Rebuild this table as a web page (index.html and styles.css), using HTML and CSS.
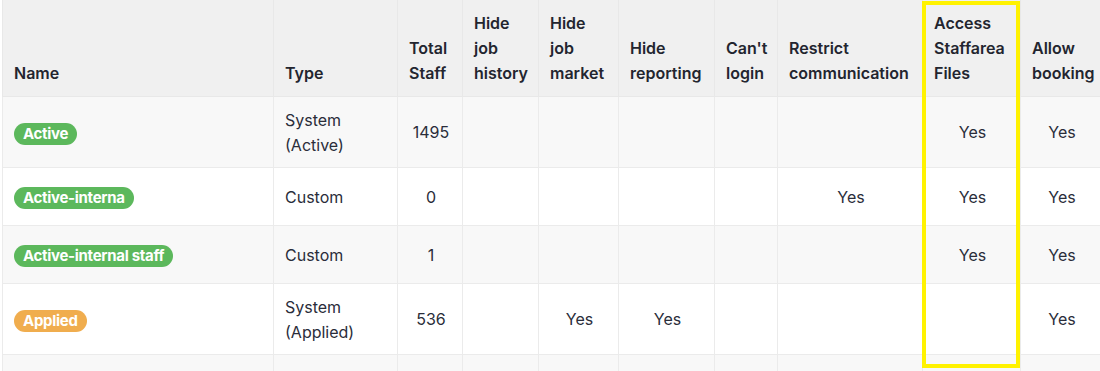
FILE: index.html
```html
<!DOCTYPE html>
<html>
<head>
<meta charset="utf-8">
<link rel="stylesheet" href="styles.css">
</head>
<body>
<div class="wrap">
  <table class="grid">
    <colgroup>
      <col class="c-name"><col class="c-type"><col class="c-total"><col class="c-hjh"><col class="c-hjm"><col class="c-hr"><col class="c-cl"><col class="c-rc"><col class="c-acc"><col class="c-ab">
    </colgroup>
    <thead>
      <tr>
        <th>Name</th>
        <th>Type</th>
        <th>Total<br>Staff</th>
        <th>Hide<br>job<br>history</th>
        <th>Hide<br>job<br>market</th>
        <th>Hide<br>reporting</th>
        <th>Can't<br>login</th>
        <th>Restrict<br>communication</th>
        <th>Access<br>Staffarea<br>Files</th>
        <th>Allow<br>booking</th>
      </tr>
    </thead>
    <tbody>
      <tr>
        <td><span class="badge green">Active</span></td>
        <td class="left">System<br>(Active)</td>
        <td>1495</td>
        <td></td><td></td><td></td><td></td><td></td>
        <td>Yes</td>
        <td>Yes</td>
      </tr>
      <tr>
        <td><span class="badge green">Active-interna</span></td>
        <td class="left">Custom</td>
        <td>0</td>
        <td></td><td></td><td></td><td></td>
        <td>Yes</td>
        <td>Yes</td>
        <td>Yes</td>
      </tr>
      <tr>
        <td><span class="badge green">Active-internal staff</span></td>
        <td class="left">Custom</td>
        <td>1</td>
        <td></td><td></td><td></td><td></td><td></td>
        <td>Yes</td>
        <td>Yes</td>
      </tr>
      <tr>
        <td><span class="badge orange">Applied</span></td>
        <td class="left">System<br>(Applied)</td>
        <td>536</td>
        <td></td>
        <td>Yes</td>
        <td>Yes</td>
        <td></td><td></td><td></td>
        <td>Yes</td>
      </tr>
      <tr>
        <td></td><td></td><td></td><td></td><td></td><td></td><td></td><td></td><td></td><td></td>
      </tr>
    </tbody>
  </table>
  <div class="highlight"></div>
</div>
</body>
</html>
```
FILE: styles.css
```css
html, body {
  margin: 0;
  padding: 0;
  overflow: hidden;
  background: #ffffff;
}
body {
  font-family: "Inter", "Liberation Sans", sans-serif;
  color: #2a2d3a;
}
.wrap {
  position: relative;
  padding-left: 2px;
}
.grid {
  border-collapse: collapse;
  table-layout: fixed;
  width: 1099px;
}
.c-name { width: 271px; }
.c-type { width: 124px; }
.c-total { width: 65px; }
.c-hjh { width: 76px; }
.c-hjm { width: 80px; }
.c-hr { width: 96px; }
.c-cl { width: 63px; }
.c-rc { width: 145px; }
.c-acc { width: 98px; }
.c-ab { width: 81px; }
.grid th {
  background: #f0f0f0;
  border: 1px solid #e8e8e8;
  border-top: none;
  text-align: left;
  vertical-align: bottom;
  font-weight: 600;
  font-size: 16px;
  line-height: 25px;
  padding: 11px 9px 10px 11px;
  color: #23252f;
  white-space: nowrap;
}
.grid td {
  border: 1px solid #ebebeb;
  height: 36px;
  padding: 11px 9px 10px 11px;
  font-size: 16px;
  line-height: 24.5px;
  text-align: center;
  vertical-align: middle;
}
.grid td.left { text-align: left; }
.grid td:first-child { text-align: left; }
.grid tbody tr:nth-child(odd) td { background: #f8f8f8; }
.grid tbody tr:nth-child(even) td { background: #ffffff; }
.badge {
  display: inline-block;
  height: 22px;
  line-height: 22px;
  padding: 0 9px;
  border-radius: 11px;
  color: #ffffff;
  font-size: 15px;
  font-weight: 700;
  letter-spacing: -0.3px;
  vertical-align: middle;
}
.badge.green { background: #5cb85c; }
.badge.orange { background: #f0ad4e; }
.highlight {
  position: absolute;
  left: 922px;
  top: 1px;
  width: 90px;
  height: 359px;
  border: 4px solid #fff200;
  pointer-events: none;
}
```
